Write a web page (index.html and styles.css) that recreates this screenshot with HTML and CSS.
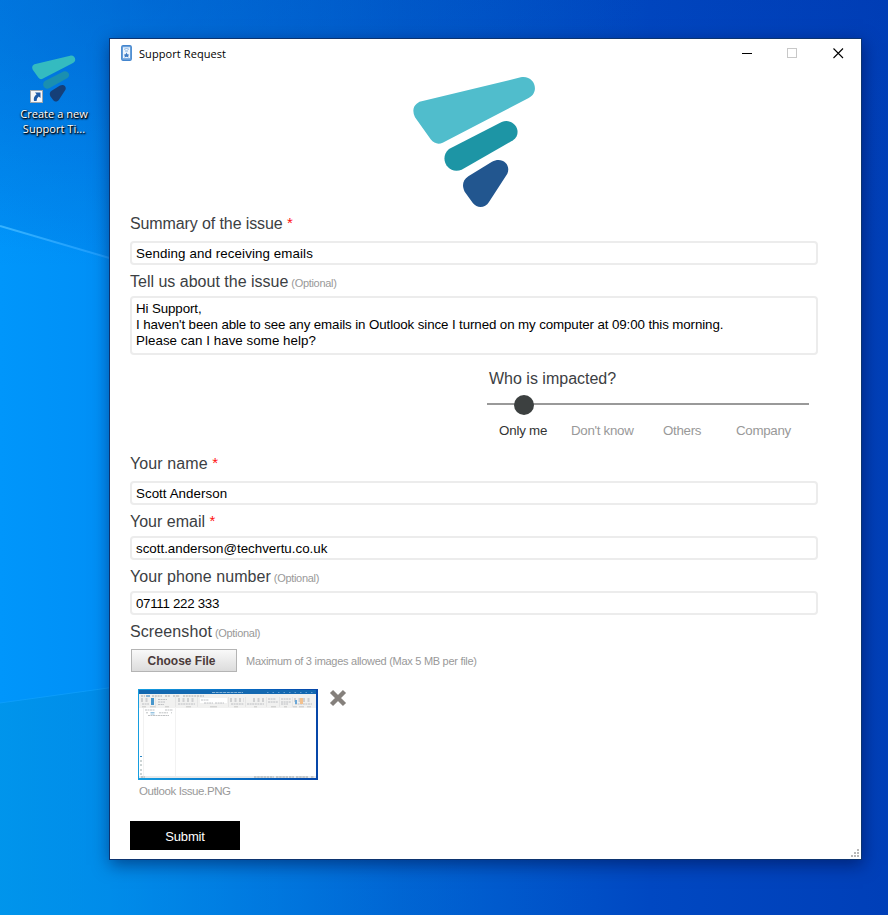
FILE: index.html
```html
<!DOCTYPE html>
<html lang="en">
<head>
<meta charset="utf-8">
<title>Support Request</title>
<link rel="stylesheet" href="styles.css">
</head>
<body>
<svg width="0" height="0" class="defs" aria-hidden="true">
  <symbol id="brand" viewBox="0 0 450 450">
    <path class="brand-a" d="M68 108L362 37C402 29 422 79 386 99L128 233Q108 242 92 223L45 157Q33 130 50 116Q58 109 68 108Z"/>
    <path class="brand-b" d="M147 252L305 171C342 157 371 202 339 226L185 314C146 331 114 281 147 252Z"/>
    <path class="brand-c" d="M205 334L276 290C306 274 334 298 322 326L267 411C256 429 232 431 219 415L194 380C185 362 188 345 205 334Z"/>
  </symbol>
</svg>
<main class="desktop">
  <svg class="wallpaper" viewBox="0 0 888 915" aria-hidden="true">
    <defs>
      <linearGradient id="beam" gradientUnits="userSpaceOnUse" x1="0" y1="0" x2="130" y2="0"><stop offset="0" stop-color="#38b4ff"/><stop offset="1" stop-color="#209cff" stop-opacity=".7"/></linearGradient>
      <linearGradient id="low" gradientUnits="userSpaceOnUse" x1="0" y1="0" x2="600" y2="0"><stop offset="0" stop-color="#0094e2" stop-opacity=".62"/><stop offset="1" stop-color="#0058c8" stop-opacity="0"/></linearGradient>
    </defs>
    <path fill="#0060c0" fill-opacity=".1" d="M0 0H130V264L0 226Z"/>
    <path stroke="url(#beam)" stroke-width="2" d="M0 226L130 264"/>
    <path fill="url(#low)" d="M0 703L130 685H600V915H0Z"/>
    <path stroke="#14a4ff" stroke-opacity=".6" d="M0 703L130 685"/>
  </svg>
  <div class="shortcut">
    <div class="shortcut-icon">
      <svg class="shortcut-logo" viewBox="30 28 390 405"><use href="#brand" width="450" height="450"/></svg>
      <svg class="shortcut-arrow" viewBox="0 0 13 13"><rect x=".5" y=".5" width="12" height="12" fill="#f4f6f8" stroke="#9da5ac"/><path fill="#1c5aa8" d="M5 2.500h5.500V8L8.700 6.500Q6.500 8 6.600 11H4Q3 7 6.600 4.300Z"/></svg>
    </div>
    <div class="shortcut-name">Create a new<br>Support Ti...</div>
  </div>

  <section class="window">
    <header class="titlebar">
      <svg class="app-icon" viewBox="0 0 11 16"><rect x=".7" y=".6" width="9.600" height="14.800" rx="1.500" fill="#75a9df" stroke="#4385ce" stroke-width="1.200"/><rect x="2" y="2.300" width="7" height="10.800" fill="#edf5fd"/><path d="M3 4.300Q5.500 2.700 8 4.300M4 6h3" fill="none" stroke="#6fa3db" stroke-width=".8"/><path d="M5.500 7.500L6.400 9.200L8.300 9.700L7 11L7.800 12.400L5.500 11.700L3.200 12.400L4 11L2.700 9.700L4.600 9.200Z" fill="#3f7cc4"/></svg>
      <h1 class="title">Support Request</h1>
      <svg class="controls" viewBox="0 0 106 14" shape-rendering="crispEdges"><path d="M0 7.500h10" stroke="#000"/><rect x="45.500" y="2.500" width="9" height="9" fill="none" stroke="#c8c8c8"/><path d="M91.500 2.500L101 12M101 2.500L91.500 12" stroke="#000" stroke-width="1.100" shape-rendering="auto"/></svg>
    </header>
    <svg class="logo"><use href="#brand"/></svg>
    <form class="form">
      <div class="label first"><span class="tight">Summary of the issue</span> <span class="req">*</span></div>
      <div class="field"><span class="wide">Sending and receiving emails</span></div>
      <div class="label l-tell"><span>Tell us about the issue</span> <span class="opt">(Optional)</span></div>
      <div class="field area"><span class="tight">Hi Support,</span><span class="tight">I haven't been able to see any emails in Outlook since I turned on my computer at 09:00 this morning.</span><span class="even">Please can I have some help?</span></div>
      <div class="impact">
        <div class="impact-title">Who is impacted?</div>
        <div class="slider"><span class="knob"></span></div>
        <div class="options"><span class="on">Only me</span><span>Don't know</span><span>Others</span><span>Company</span></div>
      </div>
      <div class="label l-name"><span class="wide">Your name</span> <span class="req">*</span></div>
      <div class="field"><span class="even">Scott Anderson</span></div>
      <div class="label l-mail"><span>Your email</span> <span class="req">*</span></div>
      <div class="field"><span>scott.anderson@techvertu.co.uk</span></div>
      <div class="label l-mail"><span class="even">Your phone number</span> <span class="opt">(Optional)</span></div>
      <div class="field"><span class="digits">07111 222 333</span></div>
      <div class="label l-shot"><span class="wide">Screenshot</span> <span class="opt">(Optional)</span></div>
      <div class="upload"><button type="button" class="choose">Choose File</button><span class="hint">Maximum of 3 images allowed (Max 5 MB per file)</span></div>
      <div class="attachment">
        <svg class="thumb" viewBox="0 0 180 91">
          <defs><linearGradient id="edge" x2="1" y2="0"><stop offset="0" stop-color="#169ee0"/><stop offset=".5" stop-color="#0873c8"/><stop offset="1" stop-color="#0646a8"/></linearGradient></defs>
          <rect width="180" height="91" fill="url(#edge)"/>
          <rect x="1" y="1" width="177" height="4" fill="#1368b0"/>
          <rect x="1" y="5" width="177" height="84" fill="#fff"/>
          <rect x="1" y="5" width="177" height="14" fill="#f1f1f0"/>
          <path d="M62 9h27v5H62z" fill="#fff"/>
          <path d="M74 3.500h31" stroke="#9fc5e2" stroke-dasharray="3 .7" stroke-width=".8"/>
          <path d="M129 3.500h48" stroke="#609bd0" stroke-dasharray="1.500 4" stroke-width="1"/>
          <path d="M3 7h4M14 7h10M27 7h5M35 7h4M39 7h3M45 7h21" stroke="#999" stroke-dasharray="2 .8" stroke-width=".8"/>
          <path d="M8 7h4" stroke="#287fc1"/>
          <path d="M3 11h9M40 11h18M92 11h14M115 11h13M156 11h17" stroke="#cfd0d1" stroke-width="4" stroke-dasharray="2 2.500"/>
          <path d="M20 10.500h9M63 11h8M130 10h8M143 10h10M20 13h7M20 15.500h6M66 14h9M77 14h9M130 13h10M143 13h10M143 15h7M4 15h7M40 15h17M93 15h13M109 15h17M157 15h17" stroke="#b0b3b6" stroke-width=".8" stroke-dasharray="2 .6"/>
          <path d="M13 9h3v7h-3z" fill="#4796cc"/><path d="M162 9h3v6h-3z" fill="#f3c18e"/>
          <path d="M157 11h2v4h-2z" fill="#6aa8d9"/>
          <path d="M4 17.800h4M12 17.800h6M27 17.800h4M48 17.800h5M72 17.800h7M96 17.800h4M116 17.800h3M133 17.800h5M146 17.800h3M155 17.800h4M161 17.800h5M169 17.800h4" stroke="#aaa" stroke-width=".6"/>
          <path d="M17.500 8v10M37.500 8v10M59.500 8v10M90.500 8v10M107.500 8v10M128.500 8v10M141.500 8v10M154.500 8v10" stroke="#ddd" stroke-width=".6"/>
          <path d="M5.500 19v69M37.500 19v69" stroke="#ededed" stroke-width=".7"/>
          <path d="M7 21h10M27 21h8M8 23.800h2M21 23.800h9M33 23.800h1M10 26.500h21" stroke="#a5a8ab" stroke-width=".7" stroke-dasharray="2 .5"/>
          <path d="M12.500 23.500h4M12.500 25h4" stroke="#69abd5" stroke-width=".7"/>
          <path d="M2 67.500h2" stroke="#2b86c4"/><path d="M2 72h2M2 76h2M2 81h2M2 85h2" stroke="#9aa"/>
          <rect x="1" y="87" width="177" height="2" fill="#e8eaeb"/>
          <path d="M3 88h4M116 88h20M138 88h12M151 88h5M158 88h12M173 88h3" stroke="#8e9292" stroke-width=".8" stroke-dasharray="2.500 .7"/>
        </svg>
        <svg class="remove" viewBox="0 0 18 18"><path d="M2.500 2.500L15.500 15.500M15.500 2.500L2.500 15.500" stroke="#85807c" stroke-width="4.400"/></svg>
      </div>
      <div class="filename">Outlook Issue.PNG</div>
      <button type="button" class="submit">Submit</button>
    </form>
    <svg class="grip" viewBox="0 0 8 8" fill="#b8b8b8" shape-rendering="crispEdges"><path d="M6 0h2v2H6zM3 3h2v2H3zM6 3h2v2H6zM0 6h2v2H0zM3 6h2v2H3zM6 6h2v2H6z"/></svg>
  </section>
</main>
</body>
</html>
```
FILE: styles.css
```css
* { box-sizing: border-box; }
body { margin: 0; font-family: "Liberation Sans", Arial, sans-serif; }
.defs { position: absolute; }
.brand-a { fill: var(--brand-a, #50bdcc); }
.brand-b { fill: var(--brand-b, #1d95a5); }
.brand-c { fill: var(--brand-c, #22568f); }
.desktop {
  position: relative; width: 888px; height: 915px; overflow: hidden;
  background:
    radial-gradient(ellipse 500px 260px at 150px 0, rgba(0,60,170,.3), rgba(0,60,170,0)),
    linear-gradient(180deg, rgba(0,45,160,.12) 0, rgba(0,60,180,.1) 90px, rgba(0,60,180,0) 270px),
    linear-gradient(90deg, #0096fb 0, #008ff6 110px, #0064d4 400px, #0048c2 650px, #003fb8 888px);
}
.wallpaper { position: absolute; inset: 0; width: 888px; height: 915px; }

.shortcut { position: absolute; left: 14px; top: 54px; width: 80px; color: #fff; text-align: center; }
.shortcut-icon { position: relative; height: 50px; }
.shortcut-logo { --brand-a: #34bbc0; --brand-b: #1a8fb0; --brand-c: #153f78; position: absolute; left: 17px; top: 0; width: 46px; height: 49px; }
.shortcut-arrow { position: absolute; left: 16px; top: 36px; width: 13px; height: 13px; }
.shortcut-name { margin-top: 2px; font: 11px/15px "Open Sans", "Noto Sans", sans-serif; letter-spacing: .05px; white-space: nowrap; text-shadow: 1px 1px 2px #000, 0 1px 2px #000, 1px 1px 1px rgba(0,0,0,.6); }

.window { position: absolute; left: 109px; top: 38px; width: 753px; height: 822px; border: 1px solid #0c3470; background: #fff; box-shadow: 1px 5px 16px rgba(0,10,60,.5); display: flex; flex-direction: column; }
.titlebar { height: 30px; flex: none; display: flex; align-items: center; padding: 0 13px 2px 11px; }
.app-icon { width: 11px; height: 16px; }
.title { margin: 2px auto 0 7px; font: 11px/16px "Open Sans", "Noto Sans", sans-serif; letter-spacing: .08px; color: #000; }
.controls { width: 106px; height: 14px; }
.logo { width: 150px; height: 150px; margin: -4px 0 0 290px; flex: none; }
.form { margin: -4px 43px 0 20px; display: flex; flex-direction: column; align-items: stretch; }
.tight { letter-spacing: -.108px; }
.wide { letter-spacing: .1px; }
.even { letter-spacing: .05px; }
.digits { letter-spacing: -.3px; }
.label { height: 20px; line-height: 22px; font-size: 16px; color: #3c4043; white-space: nowrap; }
.first { margin-top: 2px; margin-bottom: 8px; }
.req { color: #ff1010; line-height: 1; vertical-align: 1px; font-size: 15px; }
.opt { font-size: 11px; letter-spacing: -.3px; color: #999; margin-left: -1.500px; }
.field { height: 24px; flex: none; border: 2px solid #ececec; border-radius: 4px; padding: 0 4px; font-size: 13.330px; line-height: 21px; color: #000; white-space: nowrap; }
.area { height: 59px; padding-top: 3px; line-height: 16px; display: flex; flex-direction: column; align-items: flex-start; }
.l-tell { margin: 6px 0 5px; }
.impact { width: 322px; height: 97px; margin-left: 357px; color: #3c4043; }
.impact-title { padding: 14px 0 0 2px; font-size: 16px; line-height: 20px; }
.slider { position: relative; margin-top: 14px; height: 2px; background: #999; }
.knob { position: absolute; left: 26.500px; top: -8.500px; width: 20px; height: 20px; border-radius: 50%; background: #3c4040; }
.options { display: grid; grid-template-columns: 72px 92px 73px auto; padding: 18px 0 0 12px; font-size: 13.330px; line-height: 16px; letter-spacing: -.3px; color: #999; }
.options .on { color: #333; letter-spacing: -.2px; }
.l-name { margin: 1px 0 8px; }
.l-mail { margin: 6px 0 5px; }
.l-shot { margin-top: 6px; }
.upload { display: flex; align-items: center; height: 24px; margin: 7px 0 0 1px; }
.choose { width: 106px; height: 23px; border: 1px solid #b4b4b4; border-radius: 0; padding: 1px 5px 0 0; background: linear-gradient(#f9f9f9, #dcdcdc); color: #4a3a3a; font: bold 12px "Liberation Sans", sans-serif; }
.hint { margin-left: 9px; padding-top: 1px; font-size: 11px; letter-spacing: -.28px; color: #999; white-space: nowrap; }
.attachment { display: flex; align-items: flex-start; gap: 11px; margin: 17px 0 0 8px; height: 91px; }
.thumb { width: 180px; height: 91px; }
.remove { width: 18px; height: 18px; }
.filename { margin-left: 9px; height: 22px; line-height: 22px; font-size: 11.500px; letter-spacing: -.4px; color: #999; }
.submit { width: 110px; height: 29px; margin-top: 19px; border: 0; border-radius: 0; padding: 2px 0 0; background: #000; color: #fff; font: 13px "Liberation Sans", sans-serif; letter-spacing: -.2px; }
.grip { position: absolute; right: 2px; bottom: 2px; width: 8px; height: 8px; }
```
